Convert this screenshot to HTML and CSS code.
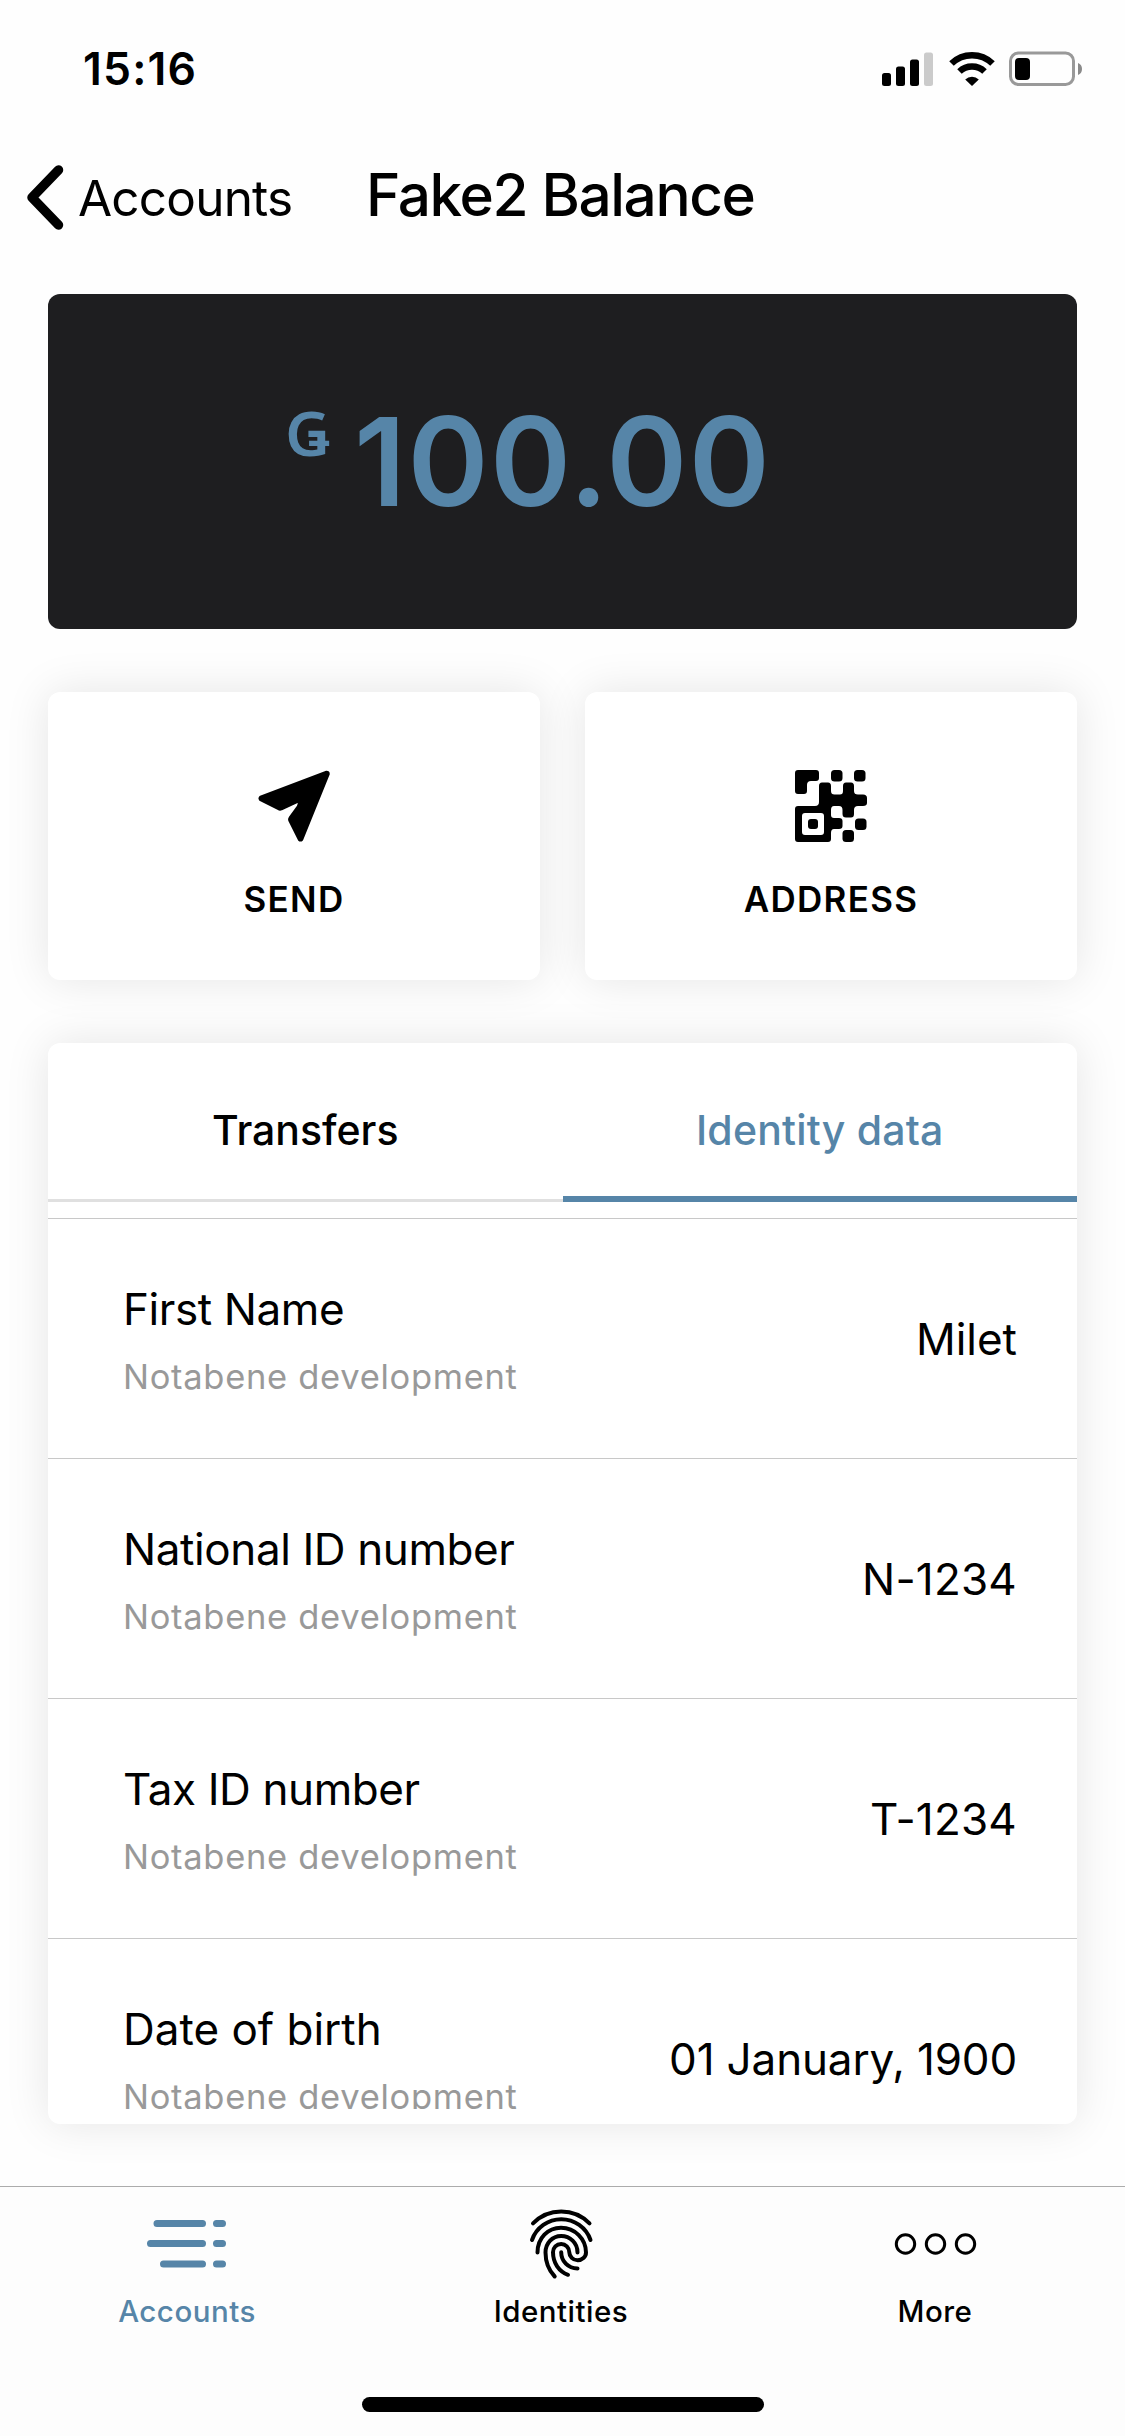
FILE: index.html
```html
<!DOCTYPE html>
<html lang="en">
<head>
<meta charset="utf-8">
<title>Fake2 Balance</title>
<link rel="stylesheet" href="styles.css">
</head>
<body>
<header class="status">
  <span class="clock">15:16</span>
  <div class="status-icons">
    <svg class="signal" width="52" height="36" viewBox="0 0 52 36">
      <rect x="0" y="22" width="9" height="13" rx="2.5"/><rect x="14" y="15.500" width="9" height="19.500" rx="2.5"/><rect x="28" y="8.500" width="9" height="26.500" rx="2.5"/><rect x="42" y="1.500" width="9" height="33.500" rx="2.5" fill="#cbcbcb"/>
    </svg>
    <svg class="wifi" width="46" height="36" viewBox="0 0 46 36">
      <path d="M2.500 12.500A29.500 29.500 0 0 1 43.500 12.500M10.500 20.500A18 18 0 0 1 35.500 20.500" fill="none" stroke="#000" stroke-width="6.500"/>
      <path d="M23 35L16.200 28.400A9.800 9.800 0 0 1 29.800 28.400Z"/>
    </svg>
    <svg class="battery" width="75" height="36" viewBox="0 0 75 36">
      <rect x="1.500" y="2" width="63" height="31.500" rx="8" fill="none" stroke="#999" stroke-width="3"/>
      <rect x="6" y="7" width="15" height="22" rx="4"/>
      <path d="M69 12Q73 13.500 73 18T69 24Z" fill="#8a8a8a"/>
    </svg>
  </div>
</header>
<nav class="navbar">
  <a class="back">
    <svg width="40" height="68" viewBox="0 0 40 68"><path d="M34.500 7L8 34.500L34.500 62" fill="none" stroke="#000" stroke-width="9.500" stroke-linecap="round" stroke-linejoin="round"/></svg>
    <span class="back-label">Accounts</span>
  </a>
  <h1 class="title">Fake2 Balance</h1>
</nav>
<main>
  <section class="balance"><span class="currency">Ǥ</span><span class="amount">100.00</span></section>
  <section class="actions">
    <button class="action">
      <svg width="74" height="74" viewBox="0 0 74 74"><path d="M3.500 28L69.500 3Q71.500 3 71.500 5L45 70.500Q43.500 72 42 70.500L32.500 51.500Q32 50 33 48.500L41 37.500Q43.500 32 39.500 33L24.500 40Q23 41 21.500 40L3.500 31Q2 29.500 3.500 28Z" stroke="#000" stroke-width="2.500" stroke-linejoin="round"/></svg>
      <span class="send">SEND</span>
    </button>
    <button class="action">
      <svg width="74" height="74" viewBox="0 0 74 74">
        <path d="M4 1H22Q25 1 25 4V9Q25 12 22 12H17Q13 12 13 16V22Q13 25 10 25H4Q1 25 1 22V4Q1 1 4 1Z"/>
        <path fill-rule="evenodd" d="M28 13.500H34Q37 13.500 37 17V22Q37 25.500 40.500 25.500H46Q49 25.500 49 22V17Q49 13.500 52 13.500H57Q60 13.500 60 17V22Q60 25.500 64 25.500H69Q73 25.500 73 29V34Q73 37 69 37H64Q60 37 60 41V45Q60 48.500 57 48.500H52Q48.500 48.500 48.500 45V41Q48.500 37 45 37H40Q37 37 37 41V46Q37 49 40 49H45Q48.500 49 48.500 52V57Q48.500 60 45 60H40Q37 60 37 64V70Q37 73 34 73H4Q1 73 1 70V40Q1 37 4 37H21Q25 37 25 33V17Q25 13.500 28 13.500ZM11 44Q8 44 8 47V63Q8 66 11 66H27Q30 66 30 63V47Q30 44 27 44Z"/>
        <rect x="14" y="50" width="10" height="10" rx="3"/><rect x="37" y="1" width="11.500" height="11.500" rx="3.500"/><rect x="60" y="1" width="11.500" height="11.500" rx="3.500"/><rect x="61" y="49.500" width="11.500" height="11.500" rx="3.500"/><rect x="48.500" y="61" width="11.500" height="12" rx="3.500"/>
      </svg>
      <span class="address">ADDRESS</span>
    </button>
  </section>
  <section class="panel">
    <div class="tabs"><a class="tab transfers">Transfers</a><a class="tab active">Identity data</a></div>
    <div class="rows">
      <div class="row"><div><p class="name">First Name</p><p class="issuer">Notabene development</p></div><span class="value">Milet</span></div>
      <div class="row"><div><p class="name">National ID number</p><p class="issuer">Notabene development</p></div><span class="value code">N-1234</span></div>
      <div class="row"><div><p class="name">Tax ID number</p><p class="issuer">Notabene development</p></div><span class="value code">T-1234</span></div>
      <div class="row"><div><p class="name birth">Date of birth</p><p class="issuer">Notabene development</p></div><span class="value date">01 January, 1900</span></div>
    </div>
  </section>
</main>
<footer class="tabbar">
  <div class="items">
    <a class="item current">
      <svg width="84" height="72" viewBox="0 0 84 72"><path d="M12 15.500H57.500M71.500 15.500H77.500M5.500 35.500H57.500M71.500 35.500H77.500M18.500 56H57.500M71.500 56H77.500" fill="none" stroke="#5685a8" stroke-width="7" stroke-linecap="round"/></svg>
      <span class="label">Accounts</span>
    </a>
    <a class="item">
      <svg width="70" height="72" viewBox="0 0 70 72"><path d="M7 15.300A39.600 39.600 0 0 1 63.500 15.300M6 32A31 31 0 0 1 64.500 32M11.500 44.500C11.500 30 22 19.700 35 19.700C49 19.700 60 31 60 44.500C60 49 56 52.300 51.700 52.300C47 52.300 43.300 48.500 43.300 44.300C43.300 39.500 39.500 36 35.200 36C30.500 36 27 39.500 27 44.300C27 55 33 63.500 42 66.800M51.500 44.500C51.500 35 44 28 35.200 28C26 28 19.500 35.500 19.500 44.500C19.500 54 23 62.500 28.700 68.500M35.200 44.300C35.200 53 42 60.500 51.500 60.500" fill="none" stroke="#000" stroke-width="4" stroke-linecap="round" stroke-linejoin="round"/></svg>
      <span class="label">Identities</span>
    </a>
    <a class="item">
      <svg width="84" height="72" viewBox="0 0 84 72"><g fill="none" stroke="#000" stroke-width="3"><circle cx="12.500" cy="36" r="9.200"/><circle cx="42.500" cy="36" r="9.200"/><circle cx="72.500" cy="36" r="9.200"/></g></svg>
      <span class="label">More</span>
    </a>
  </div>
  <div class="home"></div>
</footer>
</body>
</html>
```
FILE: styles.css
```css
* { box-sizing: border-box; }
body { margin: 0; width: 1125px; height: 2436px; overflow: hidden; background: #fefefe; color: #000; font-family: Inter, "Liberation Sans", sans-serif; display: flex; flex-direction: column; }
p, h1 { margin: 0; }
svg { display: block; flex: none; }
span, p, h1, a { white-space: nowrap; }
.status { height: 132px; padding: 51px 41px 0 83px; display: flex; justify-content: space-between; align-items: flex-start; }
.clock { font-size: 44.500px; font-weight: 600; line-height: 36px; letter-spacing: 1.200px; }
.status-icons { display: flex; gap: 14.500px; }
.navbar { height: 162px; display: flex; align-items: flex-start; padding: 31px 0 0 24px; }
.back { display: flex; width: 342px; gap: 14px; }
.back-label { font-size: 49.500px; line-height: 70px; letter-spacing: -.8px; }
.title { font-size: 58.500px; font-weight: 500; line-height: 64px; letter-spacing: -1.400px; }
main { padding: 0 48px; flex: 1; }
.balance { height: 335px; border-radius: 12px; background: #1e1e20; color: #5685a8; display: flex; padding: 101px 0 0 237px; }
.currency { font-family: "Noto Sans", sans-serif; font-weight: 600; font-size: 62px; line-height: 74px; width: 69px; }
.amount { font-size: 123px; font-weight: 600; line-height: 134px; letter-spacing: 1.400px; }
.actions { display: grid; grid-template-columns: 1fr 1fr; gap: 45px; margin-top: 63px; }
.action, .panel { background: #fff; border-radius: 12px; box-shadow: 0 0 45px rgba(0,0,0,.1); }
.action { height: 288px; border: 0; padding: 77px 0 0; font: 600 35px/42px Inter, sans-serif; color: #000; display: flex; flex-direction: column; align-items: center; gap: 35px; letter-spacing: 1.300px; }
.panel { height: 1081px; margin-top: 63px; padding-bottom: 15px; display: flex; flex-direction: column; }
.tabs { display: flex; height: 159px; flex: none; }
.tab { flex: 1; text-align: center; font-size: 41px; font-weight: 500; line-height: 175px; border-bottom: 3px solid #e0e0e0; }
.active { color: #5685a8; border-bottom: 6px solid #5685a8; letter-spacing: .2px; }
.rows { margin-top: 16px; flex: 1; overflow: hidden; }
.row { height: 240px; border-top: 1px solid #c8c8c8; padding: 63px 60px 0 75px; display: flex; justify-content: space-between; }
.name { font-size: 44px; line-height: 54px; letter-spacing: -.4px; }
.birth { letter-spacing: 0; }
.issuer { font-size: 34.500px; line-height: 42px; margin-top: 20px; color: #999; letter-spacing: .7px; }
.value { font-size: 44px; line-height: 54px; margin-top: 30px; }
.code { letter-spacing: .2px; }
.date { letter-spacing: -.15px; }
.tabbar { height: 250px; border-top: 1px solid #acacac; display: flex; flex-direction: column; align-items: center; background: #fdfdfd; }
.items { width: 100%; display: grid; grid-template-columns: repeat(3, 1fr); padding: 21px 3px 0 0; height: 210px; }
.item { display: flex; flex-direction: column; align-items: center; font-size: 29.500px; font-weight: 500; gap: 13px; }
.label { line-height: 36px; letter-spacing: .5px; }
.current { color: #5685a8; }
.home { width: 402px; height: 15px; border-radius: 8px; background: #000; }
```
